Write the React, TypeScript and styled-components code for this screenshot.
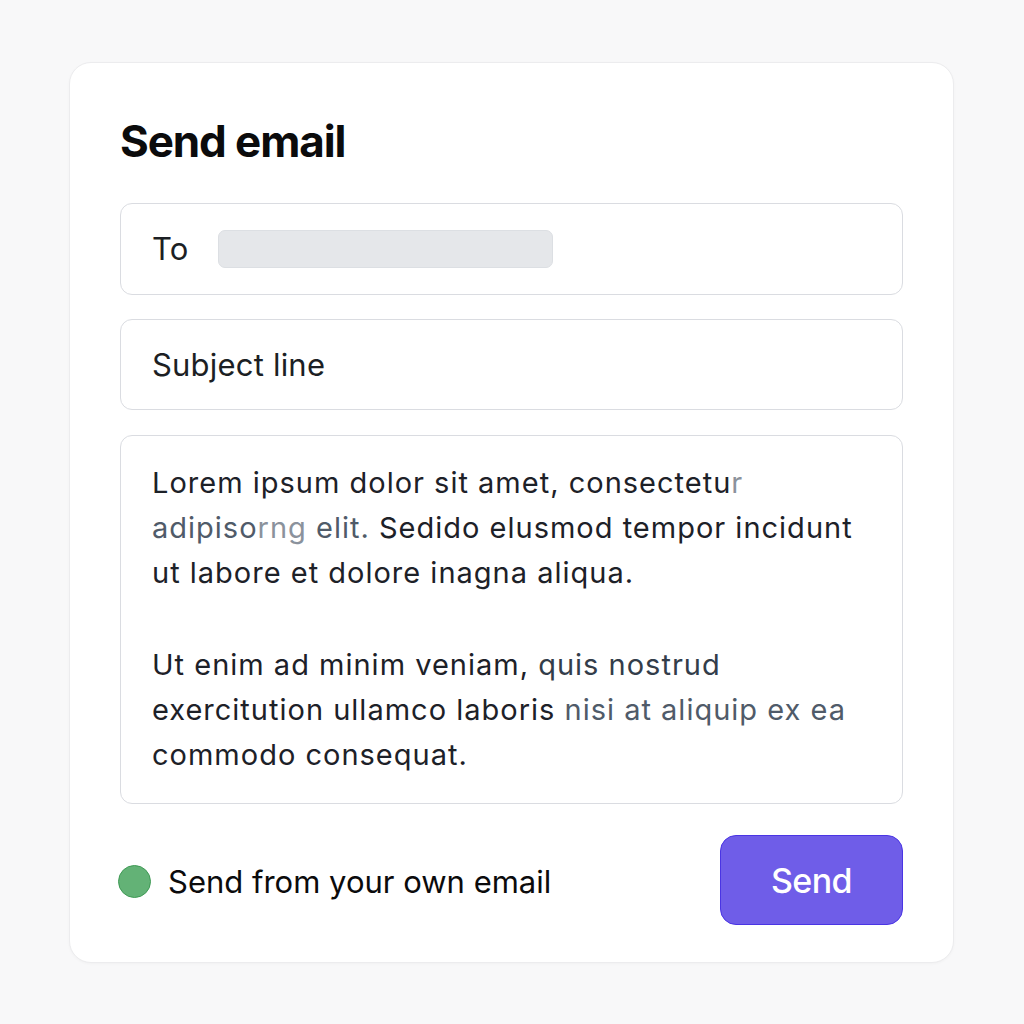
import React from 'react';
import styled, { createGlobalStyle } from 'styled-components';

const GlobalStyle = createGlobalStyle`
  html, body {
    margin: 0;
    padding: 0;
    background: #f8f8f9;
  }
  body {
    font-family: Inter, "Noto Sans", "Liberation Sans", sans-serif;
    color: #111827;
  }
`;

const Page = styled.div`
  width: 1024px;
  height: 1024px;
  box-sizing: border-box;
  padding: 62px 70px 0 69px;
`;

const Card = styled.div`
  box-sizing: border-box;
  width: 885px;
  height: 901px;
  background: #ffffff;
  border: 1px solid #ececee;
  border-radius: 22px;
  box-shadow: 0 1px 3px rgba(17, 24, 39, 0.03);
  padding: 52px 50px 37px 50px;
  display: flex;
  flex-direction: column;
`;

const Title = styled.h1`
  margin: 0 0 36px 0;
  font-size: 44px;
  line-height: 52px;
  font-weight: 700;
  letter-spacing: -1.1px;
  color: #0b0b0c;
`;

const Field = styled.div<{ height: number }>`
  box-sizing: border-box;
  height: ${({ height }) => height}px;
  border: 1.5px solid #dadce1;
  border-radius: 12px;
  display: flex;
  align-items: center;
  padding: 0 31px;
  gap: 29px;
  margin-bottom: 24px;
`;

const FieldLabel = styled.span`
  font-size: 31px;
  font-weight: 400;
  color: #1c1f24;
  letter-spacing: 0.2px;
`;

const AddressBar = styled.div`
  width: 335px;
  height: 38px;
  border-radius: 7px;
  background: #e5e7ea;
  border: 1px solid #dcdfe3;
  box-sizing: border-box;
`;

const Body = styled.div`
  box-sizing: border-box;
  height: 370px;
  margin-top: 1px;
  border: 1.5px solid #dadce1;
  border-radius: 12px;
  padding: 24px 31px;
  font-size: 29px;
  line-height: 45px;
  color: #1d2128;
  letter-spacing: 1px;
`;

const Paragraph = styled.p`
  margin: 0 0 47px 0;
  &:last-child {
    margin-bottom: 0;
  }
`;

const Muted = styled.span<{ tone?: 'light' | 'mid' | 'faint' }>`
  color: ${({ tone }) =>
    tone === 'faint' ? '#8b929c' : tone === 'light' ? '#505b69' : '#333d4a'};
`;

const Footer = styled.div`
  margin-top: 31px;
  display: flex;
  align-items: center;
  justify-content: space-between;
`;

const Sender = styled.div`
  display: flex;
  align-items: center;
  gap: 17px;
  padding-top: 2px;
`;

const Dot = styled.span`
  width: 33px;
  height: 33px;
  margin-left: -2px;
  border-radius: 50%;
  background: #63b276;
  border: 1.5px solid #3f9a55;
  box-sizing: border-box;
`;

const SenderText = styled.span`
  font-size: 31px;
  color: #0b0b0c;
  letter-spacing: 0px;
`;

const SendButton = styled.button`
  box-sizing: border-box;
  width: 183px;
  height: 90px;
  border-radius: 16px;
  background: #6f5de8;
  border: 1.5px solid #4a35e4;
  color: #ffffff;
  font-family: Inter, "Noto Sans", "Liberation Sans", sans-serif;
  font-size: 34px;
  font-weight: 500;
  letter-spacing: -0.6px;
  cursor: pointer;
`;

export default function App() {
  return (
    <Page>
      <GlobalStyle />
      <Card>
        <Title>Send email</Title>
        <Field height={92}>
          <FieldLabel>To</FieldLabel>
          <AddressBar />
        </Field>
        <Field height={91}>
          <FieldLabel>Subject line</FieldLabel>
        </Field>
        <Body>
          <Paragraph>
            Lorem ipsum dolor sit amet, consectetu<Muted tone="faint">r</Muted>
            <br />
            <Muted tone="light">adipiso</Muted>
            <Muted tone="faint">rng</Muted>
            <Muted tone="light"> elit.</Muted> Sedido elusmod tempor incidunt
            <br />
            ut labore et dolore inagna aliqua.
          </Paragraph>
          <Paragraph>
            Ut enim ad minim veniam, <Muted>quis nostrud</Muted>
            <br />
            exercitution ullamco laboris <Muted tone="light">nisi at aliquip ex ea</Muted>
            <br />
            commodo consequat.
          </Paragraph>
        </Body>
        <Footer>
          <Sender>
            <Dot />
            <SenderText>Send from your own email</SenderText>
          </Sender>
          <SendButton>Send</SendButton>
        </Footer>
      </Card>
    </Page>
  );
}
